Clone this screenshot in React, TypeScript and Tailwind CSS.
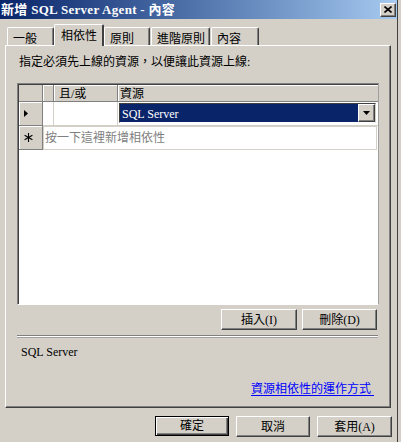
import React from "react";

const raised =
  "border border-t-white border-l-white border-r-[#404040] border-b-[#404040] shadow-[inset_-1px_-1px_#808080]";

const tabs = [
  { label: "一般", w: "w-[47px]", ml: "ml-[7px]" },
  { label: "相依性", w: "w-[50px]", ml: "", active: true },
  { label: "原則", w: "w-[46px]", ml: "" },
  { label: "進階原則", w: "w-[59px]", ml: "ml-[1px]" },
  { label: "內容", w: "w-[48px]", ml: "ml-[1px]" },
];

const Button = ({ label, width, isDefault }: { label: React.ReactNode; width: string; isDefault?: boolean }) => (
  <button
    className={
      isDefault
        ? `${width} h-[20px] flex items-center justify-center border border-black bg-[#d4d0c8] shadow-[inset_1px_1px_#fff,inset_-1px_-1px_#404040,inset_-2px_-2px_#808080] text-black`
        : `${width} h-[21px] flex items-center justify-center bg-[#d4d0c8] ${raised} text-black`
    }
  >
    {label}
  </button>
);

export default function App() {
  return (
    <div className="w-[401px] h-[442px] bg-[#d4d0c8] overflow-hidden font-['Liberation_Serif','Noto_Sans_CJK_TC',serif] text-[12px] leading-[12px] text-black">
      <div className="w-[398px] h-full border-r border-[#404040] flex flex-col">
        {/* Title bar */}
        <div className="h-[19px] flex items-center justify-between bg-gradient-to-r from-[#0a246a] to-[#a6caf0] pl-[1px] pr-[1px]">
          <span className="text-white font-bold text-[13px] leading-[13px] tracking-[0.3px]">
            新增 SQL Server Agent - 內容
          </span>
          <button className={`w-[16px] h-[14px] flex items-center justify-center bg-[#d4d0c8] ${raised}`}>
            <svg width="8" height="7" viewBox="0 0 8 7">
              <path d="M0.5 0.5 L7.5 6.5 M7.5 0.5 L0.5 6.5" stroke="#000" strokeWidth="1.6" />
            </svg>
          </button>
        </div>

        {/* Tabs */}
        <div className="flex items-end h-[26px]">
          {tabs.map((t) =>
            t.active ? (
              <div
                key={t.label}
                className={`${t.w} ${t.ml} h-[22px] -mb-[1px] relative z-10 bg-[#d4d0c8] border-l border-t border-white border-r-2 border-r-[#404040] rounded-t-[2px] flex items-start pt-[5px] pl-[6px]`}
              >
                {t.label}
              </div>
            ) : (
              <div
                key={t.label}
                className={`${t.w} ${t.ml} h-[18px] bg-[#d4d0c8] border-l border-t border-white border-r border-r-[#404040] shadow-[inset_-1px_0_#808080] rounded-t-[2px] flex items-start pt-[5px] pl-[5px]`}
              >
                {t.label}
              </div>
            )
          )}
        </div>

        {/* Panel */}
        <div className="ml-[5px] w-[386px] h-[363px] border border-t-white border-l-white border-r-[#404040] border-b-[#404040] shadow-[inset_-1px_-1px_#808080] flex flex-col px-[11px]">
          <div className="mt-[10px] pl-[2px]">指定必須先上線的資源，以便讓此資源上線:</div>

          {/* Grid */}
          <div className="mt-[15px] w-[362px] h-[222px] border border-[#808080] border-r-[#a0a0a0] border-b-white bg-white shadow-[inset_1px_1px_#404040]">
            <div className="flex h-[17px] ml-[1px] mt-[1px]">
              <div className="w-[24px] bg-[#d4d0c8] border-r border-b border-[#808080]" />
              <div className="w-[11px] bg-[#d4d0c8] border-r border-b border-[#808080] shadow-[inset_1px_1px_#fff]" />
              <div className="w-[64px] bg-[#d4d0c8] border-r border-b border-[#808080] shadow-[inset_1px_1px_#fff] pl-[5px] pt-[3px]">
                且/或
              </div>
              <div className="flex-1 bg-[#d4d0c8] border-b border-[#808080] shadow-[inset_1px_1px_#fff] pl-[2px] pt-[3px]">
                資源
              </div>
            </div>

            <div className="flex h-[24px] ml-[1px]">
              <div className="w-[24px] bg-[#d4d0c8] border-r border-b border-[#808080] shadow-[inset_1px_1px_#fff] flex items-center pl-[5px]">
                <svg width="4" height="7" viewBox="0 0 4 7">
                  <path d="M0 0 L4 3.5 L0 7 Z" fill="#000" />
                </svg>
              </div>
              <div className="w-[11px] border-r border-b border-[#d4d0c8]" />
              <div className="w-[64px] border-r border-b border-[#d4d0c8]" />
              <div className="flex-1 border-b border-[#d4d0c8] pl-[1px] pr-[2px] pt-[1px]">
                <div className="h-[20px] flex border border-t-[#404040] border-l-[#404040] border-r-[#d4d0c8] border-b-white">
                  <div className="flex-1 bg-[#0a246a] text-white pl-[2px] pt-[4px]">SQL Server</div>
                  <div className={`w-[17px] h-[18px] bg-[#d4d0c8] ${raised} flex items-center justify-center`}>
                    <svg width="7" height="4" viewBox="0 0 7 4">
                      <path d="M0 0 L7 0 L3.5 4 Z" fill="#000" />
                    </svg>
                  </div>
                </div>
              </div>
            </div>

            <div className="flex h-[24px] ml-[1px]">
              <div className="w-[24px] bg-[#d4d0c8] border-r border-b border-[#808080] shadow-[inset_1px_1px_#fff] flex items-center pl-[5px]">
                <svg width="9" height="9" viewBox="0 0 9 9">
                  <path
                    d="M4.5 0 V9 M0.6 2.25 L8.4 6.75 M8.4 2.25 L0.6 6.75"
                    stroke="#000"
                    strokeWidth="1.1"
                  />
                </svg>
              </div>
              <div className="flex-1 mr-[1px] border border-[#d4d0c8] text-[#808080] pl-[1px] flex items-center">
                按一下這裡新增相依性
              </div>
            </div>
          </div>

          {/* Insert / Delete */}
          <div className="flex justify-end gap-[5px] mt-[4px] pr-[2px]">
            <Button label="插入(I)" width="w-[76px]" />
            <Button label="刪除(D)" width="w-[75px]" />
          </div>

          {/* Separator */}
          <div className="mt-[5px] w-[361px] h-[3px] border-t border-[#808080] border-b border-b-[#a0a0a0] bg-white" />

          <div className="mt-[8px] pl-[4px]">SQL Server</div>

          <div className="mt-[25px] flex justify-end pr-[5px]">
            <a href="#" className="text-[#0000ff] underline underline-offset-[2px] whitespace-pre">
              資源相依性的運作方式{" "}
            </a>
          </div>
        </div>

        {/* Bottom buttons */}
        <div className="flex justify-end gap-[7px] mt-[8px] pr-[5px]">
          <Button label="確定" width="w-[74px]" isDefault />
          <Button label="取消" width="w-[74px]" />
          <Button label="套用(A)" width="w-[75px]" />
        </div>
      </div>
    </div>
  );
}
